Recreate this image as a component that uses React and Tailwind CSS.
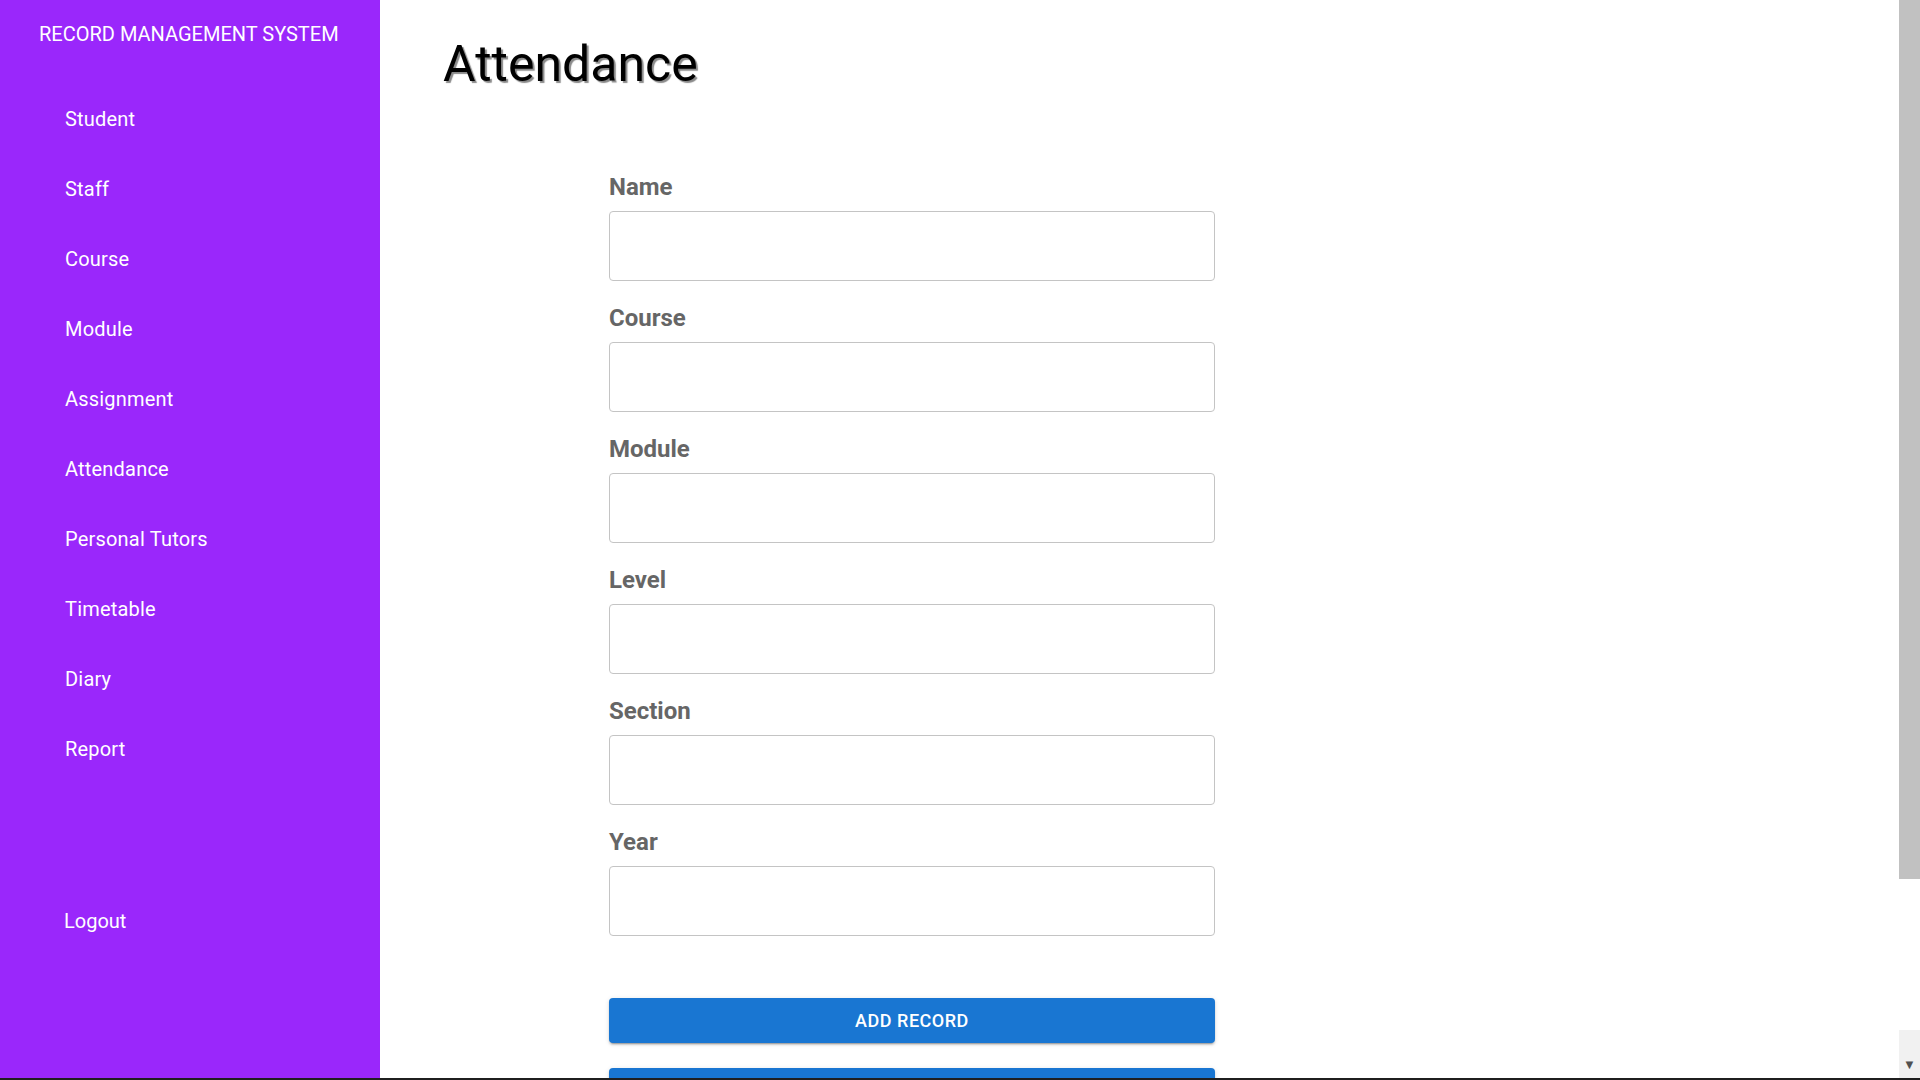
import React, { useState } from 'react';

const navItems = [
  'Student',
  'Staff',
  'Course',
  'Module',
  'Assignment',
  'Attendance',
  'Personal Tutors',
  'Timetable',
  'Diary',
  'Report',
];

const fields = ['Name', 'Course', 'Module', 'Level', 'Section', 'Year'];

const buttonClass =
  'block h-[45px] w-full rounded-[4px] bg-[#1976d2] text-[18px] font-medium uppercase tracking-[0.02857em] text-white shadow-[0_3px_1px_-2px_rgba(0,0,0,0.2),0_2px_2px_0_rgba(0,0,0,0.14),0_1px_5px_0_rgba(0,0,0,0.12)]';

const Sidebar = () => (
  <aside className="sticky top-0 h-screen w-[380px] shrink-0 bg-[#9a27fb] pt-[22px] text-white">
    <div className="pl-[39px] text-[20px] leading-6">RECORD MANAGEMENT SYSTEM</div>
    <nav className="mt-[61px] flex flex-col gap-[46px] pl-[65px]">
      {navItems.map((item) => (
        <a key={item} href="#" className="text-[20px] leading-6 tracking-[0.01em]">
          {item}
        </a>
      ))}
    </nav>
    <div className="mt-[148px] pl-[64px]">
      <a href="#" className="text-[20px] leading-6">
        Logout
      </a>
    </div>
  </aside>
);

// the page scrollbar, drawn over the right edge
const FakeScrollbar = () => (
  <div aria-hidden="true" className="fixed right-0 top-0 flex h-screen w-[21px] flex-col bg-white">
    <div className="h-[879px] bg-[#c1c1c1]" />
    <div className="flex-1" />
    <div className="flex h-[50px] items-end justify-center bg-[#f1f1f1] pb-[9px] text-[13px] leading-none text-[#505050]">
      ▼
    </div>
  </div>
);

const App = () => {
  const [record, setRecord] = useState({
    Name: '',
    Course: '',
    Module: '',
    Level: '',
    Section: '',
    Year: '',
  });

  const handleChange = (e) => {
    const { name, value } = e.target;
    setRecord((prev) => ({ ...prev, [name]: value }));
  };

  return (
    <div className="h-screen overflow-y-scroll bg-white font-['Roboto','Liberation_Sans',sans-serif]">
      <div className="flex min-h-screen">
        <Sidebar />
        <main className="flex-1 pb-[170px] pt-[39px]">
          <h1 className="pl-[63px] text-[50px] font-normal leading-none text-black [text-shadow:2px_2px_1px_#8a8a8a]">
            Attendance
          </h1>

          <form className="ml-[229px] mt-[84px] w-[606px]" onSubmit={(e) => e.preventDefault()}>
            {fields.map((field) => (
              <div key={field} className="mb-[23px]">
                <label
                  htmlFor={field}
                  className="mb-[10px] block text-[24px] font-bold leading-[28px] text-[#666666]"
                >
                  {field}
                </label>
                <input
                  id={field}
                  name={field}
                  type="text"
                  value={record[field]}
                  onChange={handleChange}
                  className="block h-[70px] w-full rounded-[4px] border border-[#c4c4c4] bg-white px-4 text-[18px] outline-none"
                />
              </div>
            ))}

            <button type="submit" className={`mt-[62px] ${buttonClass}`}>
              Add Record
            </button>
            <button type="button" className={`mt-[25px] ${buttonClass}`}>
              View Records
            </button>
          </form>
        </main>
      </div>
      <FakeScrollbar />
      <div aria-hidden="true" className="fixed bottom-0 left-0 h-[2px] w-full bg-[#1f1f1f]" />
    </div>
  );
};

export default App;
